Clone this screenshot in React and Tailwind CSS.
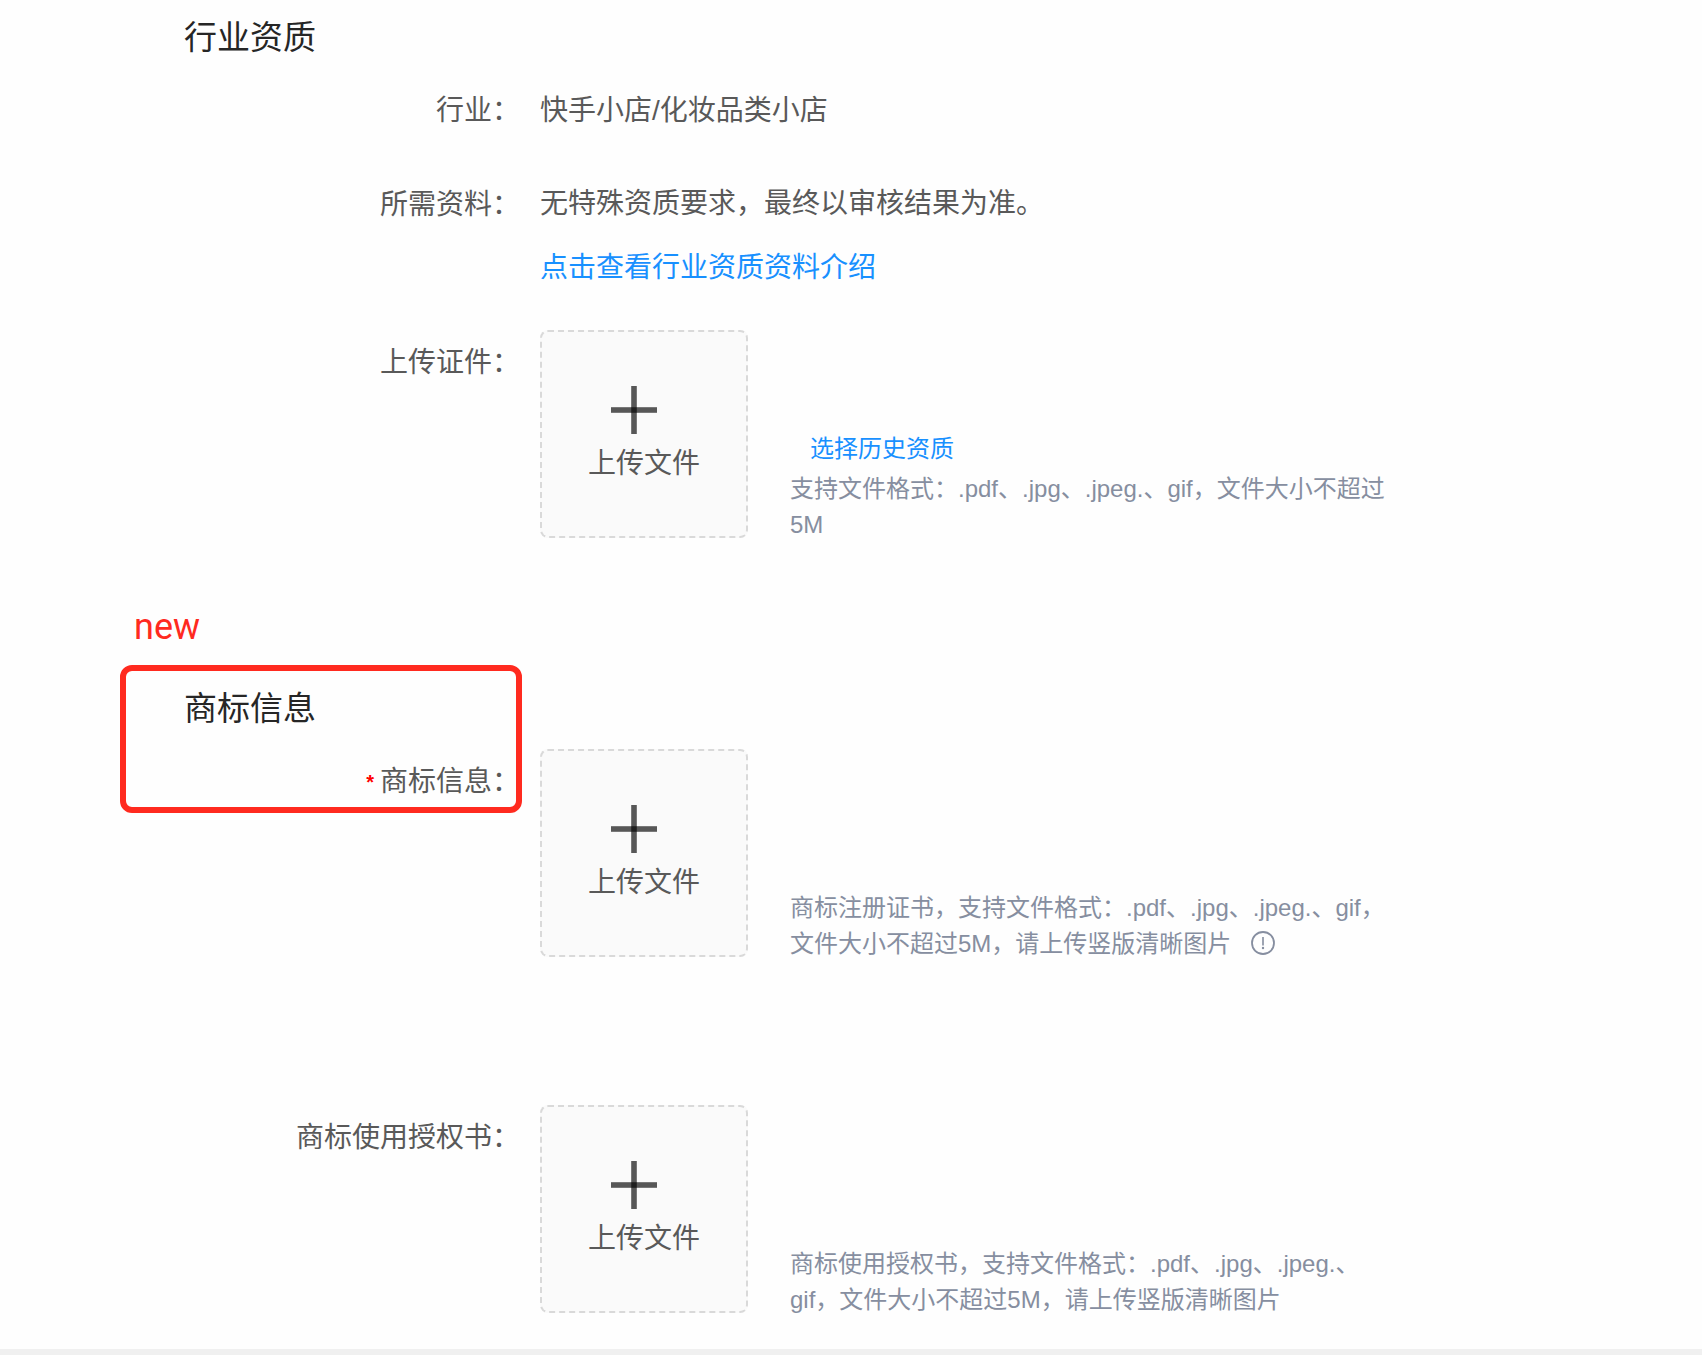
import React from 'react';

const PlusIcon = () => (
  <svg className="h-12 w-12 mr-5" viewBox="0 0 48 48" fill="#000" fillOpacity="0.65" aria-hidden="true">
    <rect x="21.2" y="0" width="5.6" height="48" />
    <rect x="1" y="21.2" width="46" height="5.6" />
  </svg>
);

const InfoIcon = () => (
  <svg className="inline-block h-6 w-6 ml-5 align-[-3px]" viewBox="0 0 24 24" fill="none" aria-hidden="true">
    <circle cx="12" cy="12" r="11" stroke="#868ea0" strokeWidth="1.8" />
    <rect x="11.2" y="6" width="1.6" height="8.5" fill="#868ea0" />
    <circle cx="12" cy="17" r="1.2" fill="#868ea0" />
  </svg>
);

const FormItem = ({ label, required, children }) => (
  <div className="flex">
    <div className="w-[520px] shrink-0 flex items-center justify-end h-16 pt-0.5 mr-5">
      {required && <span className="mr-1.5 text-xl font-bold text-[#ff0000]">*</span>}
      <span>{label}：</span>
    </div>
    <div className="flex-1 min-w-0">{children}</div>
  </div>
);

const UploadField = ({ label, required, link, children }) => (
  <FormItem label={label} required={required}>
    <div className="flex items-end">
      <button
        type="button"
        aria-label={`${label} 上传文件`}
        className="flex flex-col items-center w-52 h-52 shrink-0 pt-[54px] bg-[#fafafa] border-2 border-dashed border-[#d9d9d9] rounded-lg cursor-pointer"
      >
        <PlusIcon />
        <span className="mt-2 leading-[44px]">上传文件</span>
      </button>
      <div className="ml-[42px] -mb-[5px] max-w-[608px] text-2xl leading-9 text-[#868ea0]">
        {link && (
          <a href="#history" className="block ml-5 mb-1 text-[#1890ff]">
            {link}
          </a>
        )}
        <p>{children}</p>
      </div>
    </div>
  </FormItem>
);

const SectionTitle = ({ children }) => (
  <h2 className="ml-[184px] mb-4 text-[33px] leading-[48px] text-[#262626]">{children}</h2>
);

const App = () => {
  return (
    <div
      className="bg-[#fefefe] border-b-6 border-[#f0f0f0] pt-3.5 pb-9 text-[28px] leading-[64px] text-[#595959] font-['Liberation_Sans','Noto_Sans_CJK_SC',sans-serif]"
      lang="zh-CN"
    >
      {/* 行业资质 */}
      <section className="mb-[147px]">
        <SectionTitle>行业资质</SectionTitle>
        <div className="flex flex-col gap-[30px]">
          <FormItem label="行业">
            <p className="pt-0.5 leading-[62px]">快手小店/化妆品类小店</p>
          </FormItem>
          <FormItem label="所需资料">
            <p>无特殊资质要求，最终以审核结果为准。</p>
            <a href="#industry" className="block text-[#1890ff]">
              点击查看行业资质资料介绍
            </a>
          </FormItem>
          <UploadField label="上传证件" link="选择历史资质">
            支持文件格式：.pdf、.jpg、.jpeg.、gif，文件大小不超过5M
          </UploadField>
        </div>
      </section>

      {/* 商标信息 */}
      <section className="relative">
        <SectionTitle>商标信息</SectionTitle>
        <div className="flex flex-col gap-[148px]">
          <UploadField label="商标信息" required>
            商标注册证书，支持文件格式：.pdf、.jpg、.jpeg.、gif，文件大小不超过5M，请上传竖版清晰图片
            <InfoIcon />
          </UploadField>
          <UploadField label="商标使用授权书">
            商标使用授权书，支持文件格式：.pdf、.jpg、.jpeg.、gif，文件大小不超过5M，请上传竖版清晰图片
          </UploadField>
        </div>

        {/* 新增区块标注 */}
        <div className="absolute -top-5 left-[120px] w-[402px] h-[148px] border-6 border-[#ff2a1f] rounded-xl pointer-events-none">
          <span className="absolute bottom-full left-2 mb-6 text-4xl leading-10 text-[#ff2a1f] font-[Roboto,sans-serif]">
            new
          </span>
        </div>
      </section>
    </div>
  );
};

export default App;
